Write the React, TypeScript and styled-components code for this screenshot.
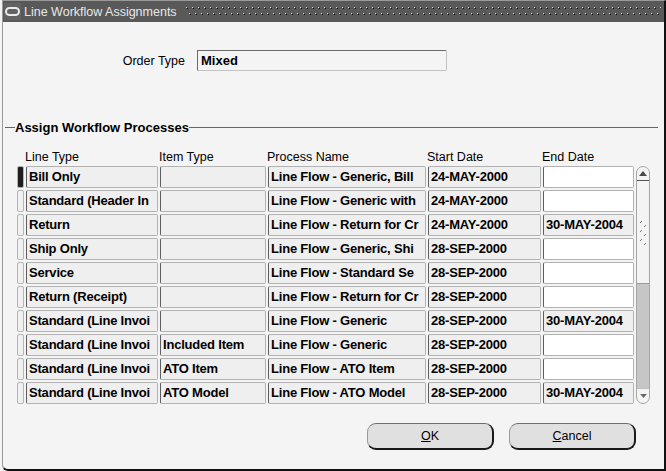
import React from 'react'
import styled, { createGlobalStyle } from 'styled-components'

const GlobalStyle = createGlobalStyle`
  html, body {
    margin: 0;
    padding: 0;
    background: #f4f4f4;
    font-family: 'Liberation Sans', Arial, sans-serif;
  }
`

const Screen = styled.div`
  width: 666px;
  height: 471px;
  display: flex;
  background: #f4f4f4;
`

const Window = styled.div`
  box-sizing: border-box;
  margin-left: 2px;
  width: 664px;
  height: 471px;
  display: flex;
  flex-direction: column;
  background: #f4f4f4;
  border-top: 1px solid #9a9a9a;
  border-left: 1px solid #9a9a9a;
  border-right: 2px solid #111;
  border-bottom: 2px solid #111;
  border-bottom-left-radius: 6px;
`

const TitleBar = styled.div`
  height: 21px;
  display: flex;
  align-items: center;
  background: #595959;
  padding-left: 1px;
  padding-right: 3px;
`

const TitleText = styled.span`
  margin-left: 3px;
  color: #e8e8e8;
  font-size: 12.5px;
  white-space: nowrap;
`

const DotStrip = styled.svg`
  flex: 1;
  height: 10px;
  margin-left: 9px;
`

const OrderRow = styled.div`
  margin-top: 28px;
  display: flex;
  align-items: center;
  gap: 12px;
`

const Label = styled.span`
  width: 182px;
  text-align: right;
  font-size: 12.5px;
  color: #000;
`

const OrderField = styled.div`
  box-sizing: border-box;
  width: 250px;
  height: 21px;
  padding-left: 3px;
  line-height: 19px;
  font-size: 13px;
  font-weight: bold;
  color: #000;
  background: #f4f4f4;
  border-top: 1px solid #6a6a6a;
  border-left: 1px solid #6a6a6a;
  border-right: 1px solid #c2c2c2;
  border-bottom: 1px solid #c2c2c2;
  border-radius: 1px 2px 2px 1px;
`

const GroupHeader = styled.div`
  margin-top: 49px;
  height: 14px;
  display: flex;
  align-items: center;
  padding-left: 2px;
  padding-right: 6px;
`

const GroupRule = styled.div<{ $grow?: boolean }>`
  height: 1px;
  background: #666;
  width: ${p => (p.$grow ? 'auto' : '10px')};
  flex: ${p => (p.$grow ? 1 : 'none')};
`

const GroupTitle = styled.span`
  font-size: 13px;
  font-weight: bold;
  color: #000;
  white-space: nowrap;
`

const Table = styled.div`
  margin-top: 16px;
  margin-left: 14px;
  display: grid;
  grid-template-columns: 7px 132px 106px 158px 113px 91px 14px;
  grid-template-rows: 14px;
  grid-auto-rows: 22px;
  column-gap: 2px;
  row-gap: 2px;
`

const HeaderCell = styled.span`
  margin-left: -1px;
  font-size: 12.5px;
  line-height: 14px;
  color: #000;
  white-space: nowrap;
`

const Indicator = styled.div<{ $current?: boolean }>`
  box-sizing: border-box;
  border: 1px solid #b4b4b4;
  border-radius: 2px;
  background: ${p => (p.$current ? '#1e1e1e' : '#f0f0f0')};
`

const Cell = styled.div<{ $white?: boolean }>`
  box-sizing: border-box;
  overflow: hidden;
  white-space: nowrap;
  padding-left: 2px;
  line-height: 20px;
  font-size: 13px;
  font-weight: bold;
  letter-spacing: -0.2px;
  color: #000;
  background: ${p => (p.$white ? '#ffffff' : '#efefef')};
  border: 1px solid #b2b2b2;
  border-left-color: #5e5e5e;
  border-radius: 2px;
`

const ScrollBar = styled.div`
  grid-column: 7;
  grid-row: 2 / span 10;
  box-sizing: border-box;
  display: flex;
  flex-direction: column;
  border: 1px solid #a6a6a6;
  border-radius: 7px;
  overflow: hidden;
  background: #f4f4f4;
`

const ArrowButton = styled.div<{ $down?: boolean }>`
  height: ${p => (p.$down ? '14px' : '13px')};
  display: flex;
  align-items: center;
  justify-content: center;
  border-bottom: ${p => (p.$down ? 'none' : '1px solid #555')};
  border-top: ${p => (p.$down ? '1px solid #c0c0c0' : 'none')};
`

const Thumb = styled.div`
  height: 102px;
  display: flex;
  align-items: center;
  justify-content: center;
  background: #f4f4f4;
  border-bottom: 1px solid #9a9a9a;
`

const Track = styled.div`
  flex: 1;
  background: #c6c6c6;
`

const ButtonRow = styled.div`
  margin-top: 19px;
  display: flex;
  justify-content: flex-end;
  gap: 15px;
  padding-right: 28px;
`

const Button = styled.div`
  box-sizing: border-box;
  width: 127px;
  height: 27px;
  display: flex;
  align-items: center;
  justify-content: center;
  font-size: 12.5px;
  color: #000;
  background: #e0e0e0;
  border-top: 1px solid #6e6e6e;
  border-left: 1px solid #9a9a9a;
  border-right: 2px solid #1a1a1a;
  border-bottom: 2px solid #1a1a1a;
  border-radius: 9px;
`

type Row = {
  lineType: string
  itemType: string
  process: string
  start: string
  end: string
}

// texts as they show in the narrow fields of the form
const rows: Row[] = [
  { lineType: 'Bill Only', itemType: '', process: 'Line Flow - Generic, Bill', start: '24-MAY-2000', end: '' },
  { lineType: 'Standard (Header In', itemType: '', process: 'Line Flow - Generic with', start: '24-MAY-2000', end: '' },
  { lineType: 'Return', itemType: '', process: 'Line Flow - Return for Cr', start: '24-MAY-2000', end: '30-MAY-2004' },
  { lineType: 'Ship Only', itemType: '', process: 'Line Flow - Generic, Shi', start: '28-SEP-2000', end: '' },
  { lineType: 'Service', itemType: '', process: 'Line Flow - Standard Se', start: '28-SEP-2000', end: '' },
  { lineType: 'Return (Receipt)', itemType: '', process: 'Line Flow - Return for Cr', start: '28-SEP-2000', end: '' },
  { lineType: 'Standard (Line Invoi', itemType: '', process: 'Line Flow - Generic', start: '28-SEP-2000', end: '30-MAY-2004' },
  { lineType: 'Standard (Line Invoi', itemType: 'Included Item', process: 'Line Flow - Generic', start: '28-SEP-2000', end: '' },
  { lineType: 'Standard (Line Invoi', itemType: 'ATO Item', process: 'Line Flow - ATO Item', start: '28-SEP-2000', end: '' },
  { lineType: 'Standard (Line Invoi', itemType: 'ATO Model', process: 'Line Flow - ATO Model', start: '28-SEP-2000', end: '30-MAY-2004' },
]

function WindowIcon() {
  return (
    <svg width="17" height="17" viewBox="0 0 17 17">
      <rect x="0" y="0" width="17" height="17" fill="#636363" />
      <rect x="2" y="5" width="13" height="7" rx="3.5" fill="none" stroke="#ececec" strokeWidth="2" />
    </svg>
  )
}

function Grip() {
  return (
    <svg width="8" height="26" viewBox="0 0 8 26">
      {[0, 9, 18].map(y => (
        <g key={y} stroke="#777" strokeWidth="1">
          <line x1="1" y1={y + 4} x2="3" y2={y + 2} />
          <line x1="5" y1={y + 8} x2="7" y2={y + 6} />
        </g>
      ))}
    </svg>
  )
}

export default function App() {
  return (
    <>
      <GlobalStyle />
      <Screen>
        <Window>
          <TitleBar>
            <WindowIcon />
            <TitleText>Line Workflow Assignments</TitleText>
            <DotStrip>
              <defs>
                <pattern id="titleDots" width="6" height="12" patternUnits="userSpaceOnUse">
                  <rect x="0" y="0" width="1" height="1" fill="#d4d4d4" />
                  <rect x="1" y="1" width="1" height="1" fill="#0a0a0a" />
                  <rect x="3" y="6" width="1" height="1" fill="#d4d4d4" />
                  <rect x="4" y="7" width="1" height="1" fill="#0a0a0a" />
                </pattern>
              </defs>
              <rect x="0" y="0" width="100%" height="10" fill="url(#titleDots)" />
            </DotStrip>
          </TitleBar>

          <OrderRow>
            <Label>Order Type</Label>
            <OrderField>Mixed</OrderField>
          </OrderRow>

          <GroupHeader>
            <GroupRule />
            <GroupTitle>Assign Workflow Processes</GroupTitle>
            <GroupRule $grow />
          </GroupHeader>

          <Table>
            <span />
            <HeaderCell>Line Type</HeaderCell>
            <HeaderCell>Item Type</HeaderCell>
            <HeaderCell>Process Name</HeaderCell>
            <HeaderCell>Start Date</HeaderCell>
            <HeaderCell>End Date</HeaderCell>
            <span />
            {rows.map((r, i) => (
              <React.Fragment key={i}>
                <Indicator $current={i === 0} />
                <Cell>{r.lineType}</Cell>
                <Cell>{r.itemType}</Cell>
                <Cell>{r.process}</Cell>
                <Cell>{r.start}</Cell>
                <Cell $white={!r.end}>{r.end}</Cell>
              </React.Fragment>
            ))}
            <ScrollBar>
              <ArrowButton>
                <svg width="8" height="5" viewBox="0 0 8 5"><path d="M0 5 L4 0 L8 5 Z" fill="#4a4a4a" /></svg>
              </ArrowButton>
              <Thumb>
                <Grip />
              </Thumb>
              <Track />
              <ArrowButton $down>
                <svg width="7" height="4" viewBox="0 0 7 4"><path d="M0 0 L7 0 L3.5 4 Z" fill="#6a6a6a" /></svg>
              </ArrowButton>
            </ScrollBar>
          </Table>

          <ButtonRow>
            <Button><u>O</u>K</Button>
            <Button><u>C</u>ancel</Button>
          </ButtonRow>
        </Window>
      </Screen>
    </>
  )
}
